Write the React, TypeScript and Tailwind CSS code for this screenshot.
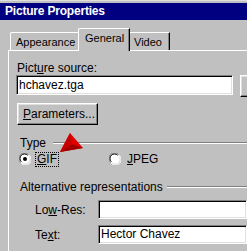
import React from "react";

const sunken =
  "border border-t-[#808080] border-l-[#808080] border-b-white border-r-white shadow-[inset_1px_1px_#000,inset_-1px_-1px_#dfdfdf] bg-white";
const raised =
  "border border-t-white border-l-white border-b-black border-r-black shadow-[inset_-1px_-1px_#808080,inset_1px_1px_#dfdfdf] bg-[#c0c0c0]";

function Radio({ checked }: { checked?: boolean }) {
  return (
    <svg width="12" height="12" viewBox="0 0 12 12" className="shrink-0">
      <circle cx="6" cy="6" r="5.5" fill="#fff" />
      <path d="M1.5 9.5 A5.5 5.5 0 0 1 9.5 1.5" stroke="#808080" strokeWidth="1" fill="none" />
      <path d="M2.3 8.7 A4.5 4.5 0 0 1 8.7 2.3" stroke="#000" strokeWidth="1" fill="none" />
      <path d="M10.5 2.5 A5.5 5.5 0 0 1 2.5 10.5" stroke="#fff" strokeWidth="1" fill="none" />
      <path d="M9.7 3.3 A4.5 4.5 0 0 1 3.3 9.7" stroke="#dfdfdf" strokeWidth="1" fill="none" />
      {checked && <circle cx="6" cy="6" r="2" fill="#000" />}
    </svg>
  );
}

function Etched() {
  return (
    <div className="flex-1 flex flex-col">
      <div className="h-px bg-[#808080]" />
      <div className="h-px bg-white" />
    </div>
  );
}

export default function App() {
  return (
    <div className="relative w-[247px] h-[251px] overflow-hidden bg-[#c0c0c0] font-['Liberation_Sans',Arial,sans-serif] text-[12px] leading-[14px] text-black">
      <div className="h-[3px] border-t border-[#dfdfdf]" />
      <div className="h-[17px] bg-[#000080] text-white font-bold text-[12px] leading-[17px] pl-[5px] tracking-[-0.2px]">
        Picture Properties
      </div>

      {/* tabs */}
      <div className="flex items-end h-[30px] pl-[10px] text-[11px]">
        <div className="w-[69px] h-[18px] border-l border-t border-white rounded-tl-[2px] pl-[5px] pt-[2px]">
          Appearance
        </div>
        <div className="relative z-10 -ml-[1px] -mb-px w-[52px] h-[23px] bg-[#c0c0c0] border-l border-t border-r border-l-white border-t-white border-r-black shadow-[inset_-1px_0_#808080] rounded-tl-[2px] pl-[6px] pt-[2px]">
          General
        </div>
        <div className="w-[40px] h-[18px] border-t border-r border-t-white border-r-black shadow-[inset_-1px_0_#808080] pl-[4px] pt-[2px]">
          Video
        </div>
      </div>

      {/* panel */}
      <div className="ml-[8px] h-[201px] border-l border-t border-white">
        <div className="pt-[10px] pl-[8px]">
          Pict<span className="underline">u</span>re source:
        </div>
        <div className="flex items-start gap-[7px] pl-[7px]">
          <div className={`${sunken} w-[217px] h-[20px] pl-[2px] leading-[18px] shrink-0`}>hchavez.tga</div>
          <div className={`${raised} w-[40px] h-[22px] shrink-0`} />
        </div>
        <div className={`${raised} ml-[8px] mt-[6px] w-[81px] h-[22px] leading-[20px] pl-[5px]`}>
          <span className="underline">P</span>arameters...
        </div>

        {/* Type group */}
        <div className="flex items-center mt-[11px] pl-[11px]">
          <span className="pr-[7px]">Type</span>
          <Etched />
        </div>
        <div className="flex items-center mt-[2px] pl-[10px]">
          <Radio checked />
          <span className="ml-[5px] px-px outline outline-1 outline-dotted outline-black leading-[13px]">
            <span className="underline">G</span>IF
          </span>
          <span className="ml-[51px]">
            <Radio />
          </span>
          <span className="ml-[6px]">
            <span className="underline">J</span>PEG
          </span>
        </div>

        <div className="flex items-center mt-[14px] pl-[11px]">
          <span className="pr-[4px]">Alternative representations</span>
          <Etched />
        </div>
        <div className="flex items-center mt-[6px] pl-[26px]">
          <span className="w-[63px]">
            Lo<span className="underline">w</span>-Res:
          </span>
          <div className={`${sunken} flex-1 h-[19px]`} />
        </div>
        <div className="flex items-center mt-[6px] pl-[26px]">
          <span className="w-[63px]">
            Te<span className="underline">x</span>t:
          </span>
          <div className={`${sunken} flex-1 h-[19px] pl-[2px] leading-[17px]`}>Hector Chavez</div>
        </div>
      </div>

      {/* red pointer arrow */}
      <svg className="absolute left-[58px] top-[132px]" width="28" height="22" viewBox="0 0 28 22">
        <polygon points="2,20 12,1 25,16" fill="#e00000" />
        <polygon points="2,20 14,12 25,16" fill="#a00000" />
        <polygon points="2,20 12,1 14,12" fill="#c80000" />
      </svg>
    </div>
  );
}
